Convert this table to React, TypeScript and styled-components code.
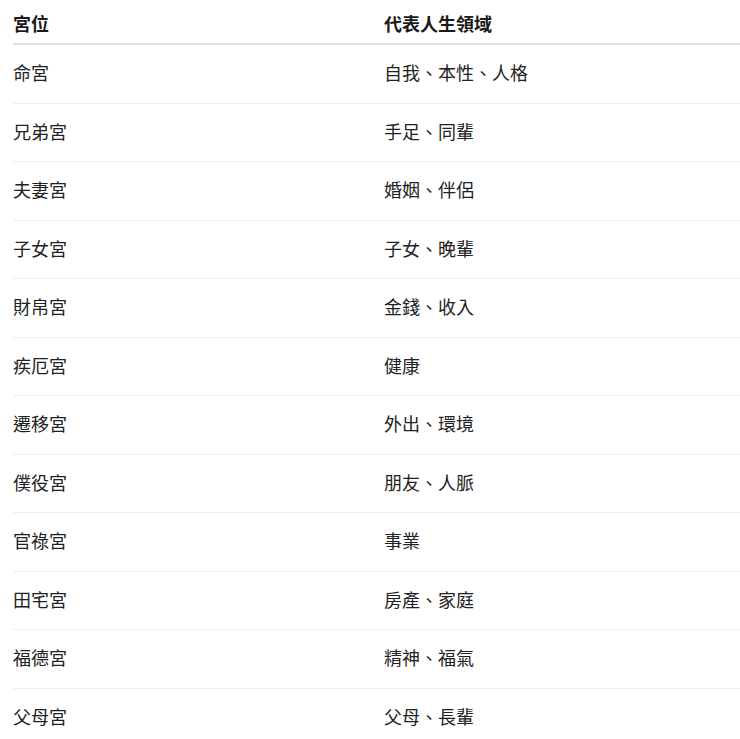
import styled, { createGlobalStyle } from "styled-components";

const GlobalStyle = createGlobalStyle`
    html, body {
        margin: 0;
        padding: 0;
        background: #ffffff;
        overflow: hidden;
    }
    body {
        font-family: "Noto Sans CJK TC", "Noto Sans", sans-serif;
        color: #1f1f1f;
    }
`

const Page = styled.div`
    width: 740px;
    height: 739px;
    padding-left: 13px;
    box-sizing: border-box;
    overflow: hidden;
`

const Table = styled.div`
    display: grid;
    grid-template-columns: 371px 1fr;
    width: 100%;
`

const HeadCell = styled.div`
    padding: 9.5px 0 6.5px 0;
    line-height: 27px;
    font-size: 18px;
    font-weight: 700;
    color: #1a1a1a;
    border-bottom: 2px solid #e2e2e2;
`

const Cell = styled.div<{ $last?: boolean }>`
    padding: 14.25px 0 16.25px 0;
    line-height: 27px;
    font-size: 18px;
    font-weight: 400;
    color: #222222;
    border-bottom: ${({ $last }) => ($last ? "none" : "1px solid #efefef")};
`

const rows: [string, string][] = [
    ["命宮", "自我、本性、人格"],
    ["兄弟宮", "手足、同輩"],
    ["夫妻宮", "婚姻、伴侶"],
    ["子女宮", "子女、晚輩"],
    ["財帛宮", "金錢、收入"],
    ["疾厄宮", "健康"],
    ["遷移宮", "外出、環境"],
    ["僕役宮", "朋友、人脈"],
    ["官祿宮", "事業"],
    ["田宅宮", "房產、家庭"],
    ["福德宮", "精神、福氣"],
    ["父母宮", "父母、長輩"],
];

function App(): JSX.Element {
    return (
        <>
        <GlobalStyle />
        <Page>
            <Table>
                <HeadCell>宮位</HeadCell>
                <HeadCell>代表人生領域</HeadCell>
                {rows.map(([palace, area], i) => {
                    const last = i === rows.length - 1;
                    return (
                        <>
                            <Cell key={palace} $last={last}>{palace}</Cell>
                            <Cell key={area} $last={last}>{area}</Cell>
                        </>
                    )
                })}
            </Table>
        </Page>
        </>
    )
}

export default App;
